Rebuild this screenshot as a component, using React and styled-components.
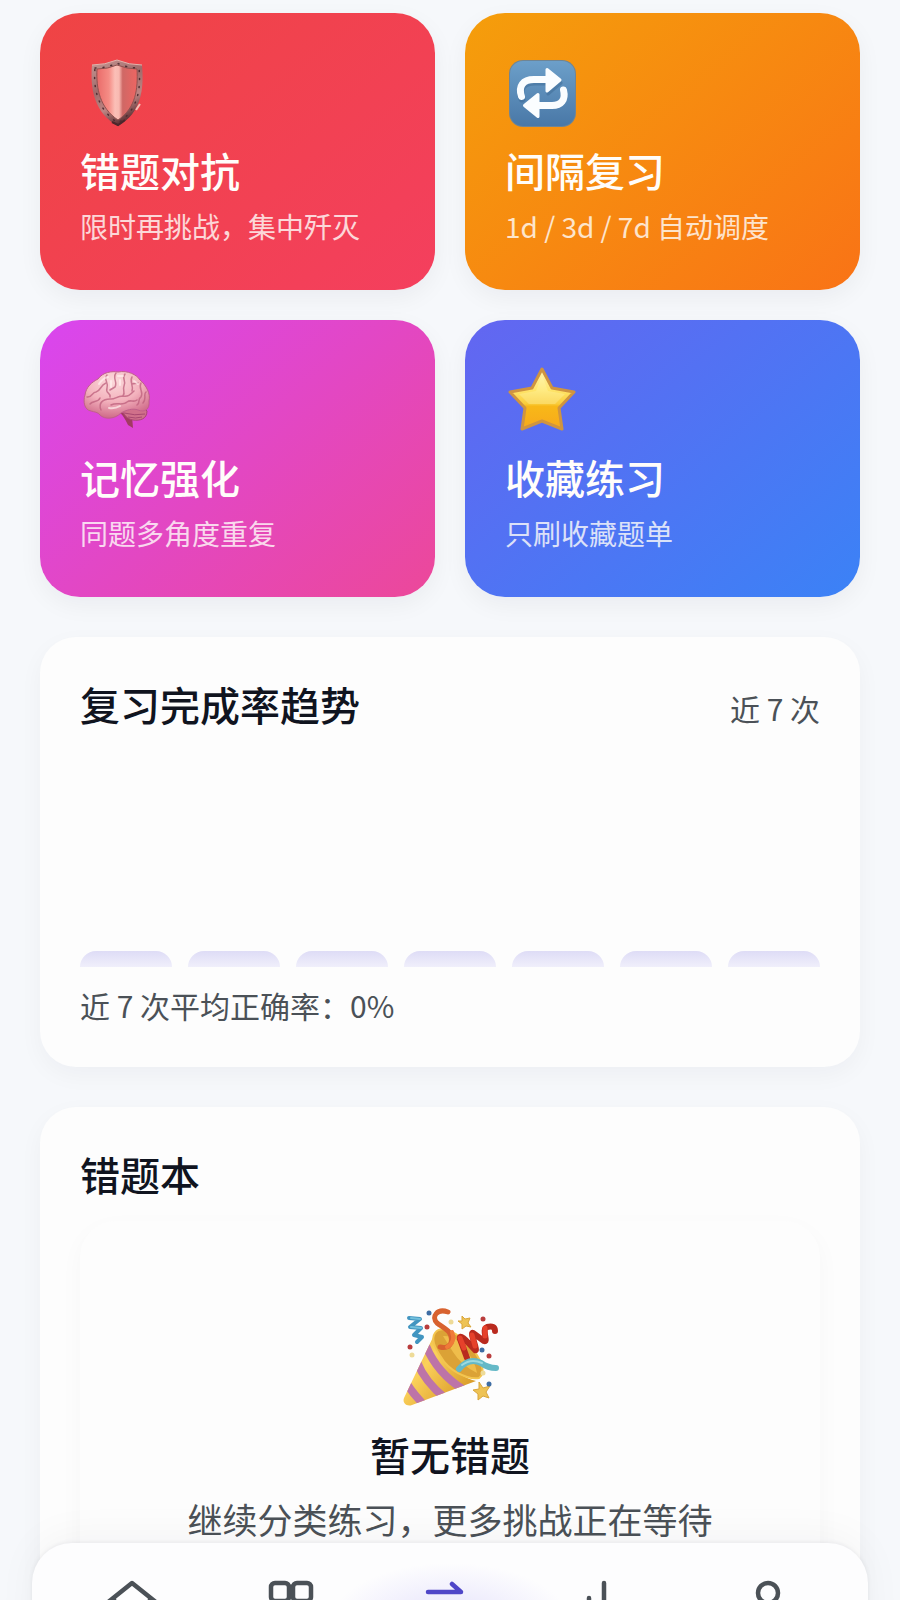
import React from 'react'
import styled, { createGlobalStyle } from 'styled-components'


const GlobalStyle = createGlobalStyle`
	* {
		box-sizing: border-box;
	}

	body {
		margin: 0;
		background: #f6f8fb;
		color: #10141f;
		font-family: "Noto Sans CJK SC", sans-serif;
	}

	h2, h3, p {
		margin: 0;
	}
`;

const Screen = styled.div`
	position: relative;
	height: 100vh;
	overflow: hidden;
`;

const Main = styled.main`
	display: flex;
	flex-direction: column;
	gap: 40px;
	height: 100%;
	padding: 13px 40px 0;
	overflow-y: auto;
	scrollbar-width: none;
`;

const ModeGrid = styled.section`
	display: grid;
	grid-template-columns: 1fr 1fr;
	gap: 30px;
`;

const ModeCard = styled.button`
	display: flex;
	flex-direction: column;
	align-items: flex-start;
	gap: 12px;
	padding: 40px 40px 45px;
	border: 0;
	border-radius: 40px;
	background: linear-gradient(140deg, ${props => props.$from}, ${props => props.$to});
	box-shadow: 0 8px 24px rgba(15, 23, 42, 0.05);
	color: #fffdfa;
	font-family: inherit;
	text-align: left;
	cursor: pointer;
`;

const ModeIcon = styled.span`
	display: flex;
	align-items: center;
	justify-content: center;
	width: 74px;
	height: 80px;
`;

const ModeTitle = styled.span`
	font-size: 40px;
	font-weight: 500;
	line-height: 50px;
`;

const ModeText = styled.span`
	font-size: 28px;
	line-height: 38px;
	opacity: 0.8;
`;

const Card = styled.section`
	flex-shrink: 0;
	display: flex;
	flex-direction: column;
	gap: 20px;
	padding: 40px 40px 44px;
	border-radius: 36px;
	background: #fdfdfd;
	box-shadow: 0 8px 24px rgba(15, 23, 42, 0.04);
`;

const CardHead = styled.header`
	display: flex;
	align-items: baseline;
	justify-content: space-between;
`;

const CardTitle = styled.h2`
	font-size: 40px;
	font-weight: 500;
	line-height: 54px;
`;

const Note = styled.p`
	color: #4b5157;
	font-size: 30px;
	line-height: 36px;
`;

const Chart = styled.div`
	display: flex;
	align-items: flex-end;
	gap: 16px;
	height: 216px;
`;

const Bar = styled.div`
	flex: 1;
	min-height: 16px;
	border-radius: 16px 16px 0 0;
	background: linear-gradient(180deg, #dedcf6, #f0effb);
`;

const Empty = styled.div`
	display: flex;
	flex-direction: column;
	align-items: center;
	padding: 86px 20px 140px;
	border-radius: 36px;
	background: #fdfdfd;
	box-shadow: 0 8px 24px rgba(15, 23, 42, 0.03);
	text-align: center;
`;

const EmptyTitle = styled.h3`
	margin-top: 18px;
	font-size: 40px;
	font-weight: 500;
	line-height: 54px;
`;

const EmptyText = styled.p`
	margin-top: 18px;
	color: #4b5157;
	font-size: 35px;
	line-height: 40px;
`;

// Overlays the list, its lower part slides under the screen edge
const TabBar = styled.nav`
	position: absolute;
	right: 32px;
	bottom: -83px;
	left: 32px;
	display: flex;
	height: 140px;
	padding: 0 20px;
	border-radius: 40px;
	background: #fdfdfe;
	box-shadow: 0 -1px 4px rgba(15, 23, 42, 0.06), 0 -8px 40px rgba(15, 23, 42, 0.04);
`;

const Tab = styled.a`
	flex: 1 1 0;
	display: flex;
	justify-content: center;
	padding-top: 36px;
	color: #4b5157;
`;

const ActiveTab = styled(Tab)`
	flex-basis: 100px;
	margin: 0 -50px;
	background: radial-gradient(ellipse 120px 60px at 50% 80px, #e4e1fc, rgba(253, 253, 254, 0));
	color: #4f46c8;
`;

const ShieldIcon = () => (
	<svg width="74" height="74" viewBox="0 0 74 74" aria-hidden="true">
		<defs>
			<linearGradient id="shieldFace" x1="0" x2="1">
				<stop offset="0" stopColor="#ea6b69" />
				<stop offset="0.3" stopColor="#f58d86" />
				<stop offset="0.45" stopColor="#fbbfb7" />
				<stop offset="0.55" stopColor="#f8b9b1" />
				<stop offset="0.64" stopColor="#cf6865" />
				<stop offset="1" stopColor="#ee6562" />
			</linearGradient>
			<linearGradient id="shieldRim" x1="0" y1="0" x2="0.4" y2="1">
				<stop offset="0" stopColor="#c99a96" />
				<stop offset="0.45" stopColor="#a06a6a" />
				<stop offset="0.75" stopColor="#bd8583" />
				<stop offset="1" stopColor="#65373a" />
			</linearGradient>
		</defs>
		<path d="M12 9 Q25 9 37 4 Q49 9 62 9 C64 32 62 57 38 70 C14 57 10 32 12 9Z" fill="url(#shieldRim)" />
		<path d="M17 13 Q28 13 37 9 Q47 13 57 13 C58 33 56 52 38 64 C20 52 16 33 17 13Z" fill="url(#shieldFace)" stroke="#91514f" />
		<path d="M15 12 Q27 12 37 7 Q47 12 59 12 C61 33 58 54 38 67 C18 54 13 33 15 12" fill="none" stroke="#502e33" strokeWidth="1.500" strokeDasharray="1 7" strokeLinecap="round" />
		<path d="M12 9 Q25 9 37 4 Q49 9 62 9" fill="none" stroke="#dfb5ae" />
		<path d="M56 54 L60 48" stroke="#f2c1b6" strokeWidth="2" />
		<path d="M32 66 L38 69 L45 64" fill="none" stroke="#4c262b" strokeWidth="2" />
	</svg>
);

const RepeatIcon = () => (
	<svg width="74" height="74" viewBox="0 0 74 74" aria-hidden="true">
		<defs>
			<linearGradient id="repeatBack" x1="0" y1="0" x2="0" y2="1">
				<stop offset="0" stopColor="#6c9fc9" />
				<stop offset="1" stopColor="#4978a7" />
			</linearGradient>
		</defs>
		<rect x="4" y="4" width="67" height="67" rx="14" fill="#6f8595" />
		<rect x="5" y="5" width="65" height="65" rx="13" fill="url(#repeatBack)" />
		<g transform="translate(2 2)" fill="#35618c" stroke="#35618c" opacity="0.4">
			<path d="M15 41 C11 30 17 24 28 24 H42" fill="none" strokeWidth="7" strokeLinecap="round" />
			<path d="M41 14 L54 25 L41 36Z" strokeWidth="3" strokeLinejoin="round" />
		</g>
		<g transform="translate(1 0)" fill="#fafdff" stroke="#fafdff">
			<path d="M15.500 40.500 C12 30 17 23.500 28 23.500 H42" fill="none" strokeWidth="7" strokeLinecap="round" />
			<path d="M41 13.500 L54 24 L41 35Z" strokeWidth="3" strokeLinejoin="round" />
			<path d="M57.500 34 C60 44 55 49.500 46 49.500 H31" fill="none" strokeWidth="7" strokeLinecap="round" />
			<path d="M32 38.500 L18.500 49.500 L32 60.500Z" strokeWidth="3" strokeLinejoin="round" />
		</g>
	</svg>
);

const BrainIcon = () => (
	<svg width="74" height="74" viewBox="0 0 74 74" aria-hidden="true">
		<defs>
			<radialGradient id="brainFill" cx="0.45" cy="0.2" r="0.8">
				<stop offset="0" stopColor="#fcdadc" />
				<stop offset="0.55" stopColor="#f3b2bd" />
				<stop offset="1" stopColor="#cf6a88" />
			</radialGradient>
		</defs>
		<path d="M38 48 C43 52 45 56 48 62 L53 65 L52 53Z" fill="#a23a62" />
		<path d="M41 46 C47 41 63 42 67 48 C67 56 60 58 53 57 C47 56 44 52 41 46Z" fill="#d0708a" stroke="#a84870" />
		<path d="M44 50 Q55 53 65 51 M48 54 Q56 56 62 54" fill="none" stroke="#a84870" />
		<path d="M11 48 C4 47 3 38 5 32 C6 24 12 19 18 16 C23 9 32 8 38 9 C48 7 57 12 60 17 C66 22 71 31 69 38 C70 46 65 50 58 47 C53 45 46 47 41 50 C35 56 25 57 20 52 C18 49 14 49 11 48Z" fill="url(#brainFill)" stroke="#c0608a" />
		<g fill="none" stroke="#bd5f7c" strokeWidth="1.500" strokeLinecap="round" strokeLinejoin="round" opacity="0.75">
			<path d="M21 47 C18 40 23 36 30 36 C35 37 36 33 43 33 C48 34 50 32 54 28" />
			<path d="M7 34 C12 35 12 29 16 29 C21 28 20 22 26 20" />
			<path d="M10 41 C13 37 18 40 20 35" />
			<path d="M27 12 C23 17 29 19 27 25 C25 31 31 29 30 34" />
			<path d="M36 10 C32 15 38 19 35 24 M35 24 L30 27" />
			<path d="M45 11 C41 16 47 18 44 23 C42 28 46 29 43 33" />
			<path d="M52 14 C49 19 54 22 52 28 M52 21 L58 20" />
			<path d="M61 20 C58 26 64 28 61 34 C57 36 61 39 57 42" />
			<path d="M66 29 C63 31 67 36 63 40 M31 42 C37 39 43 43 47 39 C51 36 53 40 57 37" />
		</g>
		<path d="M19 21 Q23 15 28 14 M38 13 L43 13 M29 45 Q35 46 40 43 M54 18 L58 21 M31 18 V24 M40 17 V22" fill="none" stroke="#fff0ee" strokeWidth="2" strokeLinecap="round" opacity="0.7" />
	</svg>
);

const StarIcon = () => (
	<svg width="74" height="74" viewBox="0 0 74 74" aria-hidden="true">
		<defs>
			<linearGradient id="starFill" x1="0" y1="0" x2="0" y2="1">
				<stop offset="0" stopColor="#fff6b4" />
				<stop offset="0.35" stopColor="#ffe56b" />
				<stop offset="0.58" stopColor="#f9cc3c" />
				<stop offset="0.62" stopColor="#f8b818" />
				<stop offset="1" stopColor="#f7a91b" />
			</linearGradient>
		</defs>
		<path d="M37 6 L47 25 L69 29 L54 45 L57 66 L37 58 L17 66 L20 45 L5 29 L27 25Z" fill="url(#starFill)" stroke="#cf9440" strokeWidth="3" strokeLinejoin="round" />
		<path d="M37 12 L43 28 L60 31 L50 41 H24 L14 31 L31 28Z" fill="#fff8b9" opacity="0.3" />
	</svg>
);

const PartyIcon = () => (
	<svg width="102" height="102" viewBox="2 0 102 102" aria-hidden="true">
		<defs>
			<linearGradient id="coneFill" x1="0" y1="0" x2="1" y2="0.8">
				<stop offset="0" stopColor="#e1a936" />
				<stop offset="0.4" stopColor="#fbd15b" />
				<stop offset="1" stopColor="#d59421" />
			</linearGradient>
			<clipPath id="coneShape">
				<path d="M38 26 C39 46 55 68 79 74 L15 98 C10 100 5 96 7 91Z" />
			</clipPath>
		</defs>
		<path d="M38 26 C39 46 55 68 79 74 L15 98 C10 100 5 96 7 91Z" fill="url(#coneFill)" />
		<g clipPath="url(#coneShape)" fill="none" stroke="#bd74a8" strokeWidth="8">
			<path d="M29 39 Q40 66 67 83" />
			<path d="M20 55 Q28 75 48 91" />
			<path d="M10 77 Q17 88 28 99" />
		</g>
		<path d="M38 26 C45 17 61 26 74 40 C83 51 90 65 82 71 C70 73 51 63 44 50 C37 40 34 32 38 26Z" fill="#dba236" stroke="#f3c54f" strokeWidth="2" />
		<path d="M46 29 Q60 28 70 45 Q78 54 80 66 Q64 58 56 45Z" fill="#efbd4b" />
		<g fill="none" strokeLinecap="round" strokeLinejoin="round">
			<path d="M51 5 C40 1 34 10 40 16 C46 21 57 24 54 36 Q51 42 43 40" stroke="#d8622f" strokeWidth="5" />
			<path d="M50 40 Q59 35 55 25" stroke="#f07a38" strokeWidth="4" />
			<path d="M70 51 L63 32 C62 26 68 32 78 43 C82 46 72 24 76 26 L87 34 C92 36 84 22 90 20 Q98 18 98 24" stroke="#b92a1e" strokeWidth="6" />
			<path d="M67 41 L63 31 M78 39 L75 28 M88 29 L88 21" stroke="#e6412b" strokeWidth="5" />
			<path d="M12 11 L23 12 L13 20 L24 21 L17 28 L25 30 L20 35" stroke="#4295c0" strokeWidth="4" />
			<path d="M14 11 L23 12 M14 20 L24 21" stroke="#72c0dc" strokeWidth="2" />
			<path d="M62 62 Q72 50 84 56 Q91 61 99 61" stroke="#65b9c7" strokeWidth="6" />
			<path d="M65 58 Q74 51 85 56" stroke="#9cdae0" strokeWidth="2" />
		</g>
		<path d="M65 9 L68 12 L73 11 L71 16 L74 20 L69 19 L65 22 L65 17 L61 14 L65 14Z M82 75 L86 81 L93 79 L89 85 L92 91 L86 89 L81 93 L81 87 L76 83 L82 82Z" fill="#eec354" stroke="#d9a63b" />
		<g fill="#b93c3c">
			<circle cx="30" cy="20" r="2.500" /><circle cx="13" cy="40" r="2.500" /><circle cx="86" cy="12" r="2.500" /><circle cx="92" cy="49" r="2.500" />
		</g>
		<g fill="#3e6da4">
			<circle cx="32" cy="6" r="2.500" /><circle cx="85" cy="43" r="2.500" /><circle cx="92" cy="77" r="2.500" />
		</g>
		<g fill="#eedb98">
			<circle cx="15" cy="48" r="2.500" /><circle cx="54" cy="15" r="2.500" /><circle cx="86" cy="66" r="2.500" />
		</g>
	</svg>
);

const TabIcon = ({ children }) => (
	<svg width="60" height="60" viewBox="0 0 60 60" fill="none" stroke="currentColor" strokeWidth="4.500" strokeLinecap="round" strokeLinejoin="round" aria-hidden="true">
		{children}
	</svg>
);

const modes = [
	{ title: '错题对抗', text: '限时再挑战，集中歼灭', from: '#ef4444', to: '#f43f5e', Icon: ShieldIcon },
	{ title: '间隔复习', text: '1d / 3d / 7d 自动调度', from: '#f59e0b', to: '#f97316', Icon: RepeatIcon },
	{ title: '记忆强化', text: '同题多角度重复', from: '#d946ef', to: '#ec4899', Icon: BrainIcon },
	{ title: '收藏练习', text: '只刷收藏题单', from: '#6366f1', to: '#3b82f6', Icon: StarIcon },
];

const rates = [0, 0, 0, 0, 0, 0, 0];

const tabs = [
	{ label: '首页', icon: <path d="M5 24 L30 4 L55 24 M12 20 V54 H48 V20" /> },
	{ label: '分类', icon: <><rect x="10" y="4" width="18" height="18" rx="4" /><rect x="32" y="4" width="18" height="18" rx="4" /><rect x="10" y="26" width="18" height="18" rx="4" /><rect x="32" y="26" width="18" height="18" rx="4" /></> },
	{ label: '复习', active: true, icon: <path d="M8 13 H41 L32 5 M52 35 H19 L28 43" /> },
	{ label: '统计', icon: <path d="M25 4 V48 M10 19 V48 M40 28 V48" /> },
	{ label: '我的', icon: <><circle cx="30" cy="14" r="10" /><path d="M10 50 C10 26 50 26 50 50" /></> },
];

export default function App() {
	const average = rates.reduce((sum, rate) => sum + rate, 0) / rates.length;

	return (
		<Screen>
			<GlobalStyle />
			<Main>
				<ModeGrid>
					{modes.map(({ title, text, from, to, Icon }) => (
						<ModeCard key={title} type="button" $from={from} $to={to}>
							<ModeIcon><Icon /></ModeIcon>
							<ModeTitle>{title}</ModeTitle>
							<ModeText>{text}</ModeText>
						</ModeCard>
					))}
				</ModeGrid>

				<Card>
					<CardHead>
						<CardTitle>复习完成率趋势</CardTitle>
						<Note>近 7 次</Note>
					</CardHead>
					<Chart>
						{rates.map((rate, i) => <Bar key={i} style={{ height: `${rate}%` }} />)}
					</Chart>
					<Note>近 7 次平均正确率：{average}%</Note>
				</Card>

				<Card>
					<CardTitle>错题本</CardTitle>
					<Empty>
						<PartyIcon />
						<EmptyTitle>暂无错题</EmptyTitle>
						<EmptyText>继续分类练习，更多挑战正在等待</EmptyText>
					</Empty>
				</Card>
			</Main>

			<TabBar>
				{tabs.map(({ label, active, icon }) => {
					const Item = active ? ActiveTab : Tab;
					return (
						<Item key={label} href="#" aria-label={label}>
							<TabIcon>{icon}</TabIcon>
						</Item>
					);
				})}
			</TabBar>
		</Screen>
	);
}
